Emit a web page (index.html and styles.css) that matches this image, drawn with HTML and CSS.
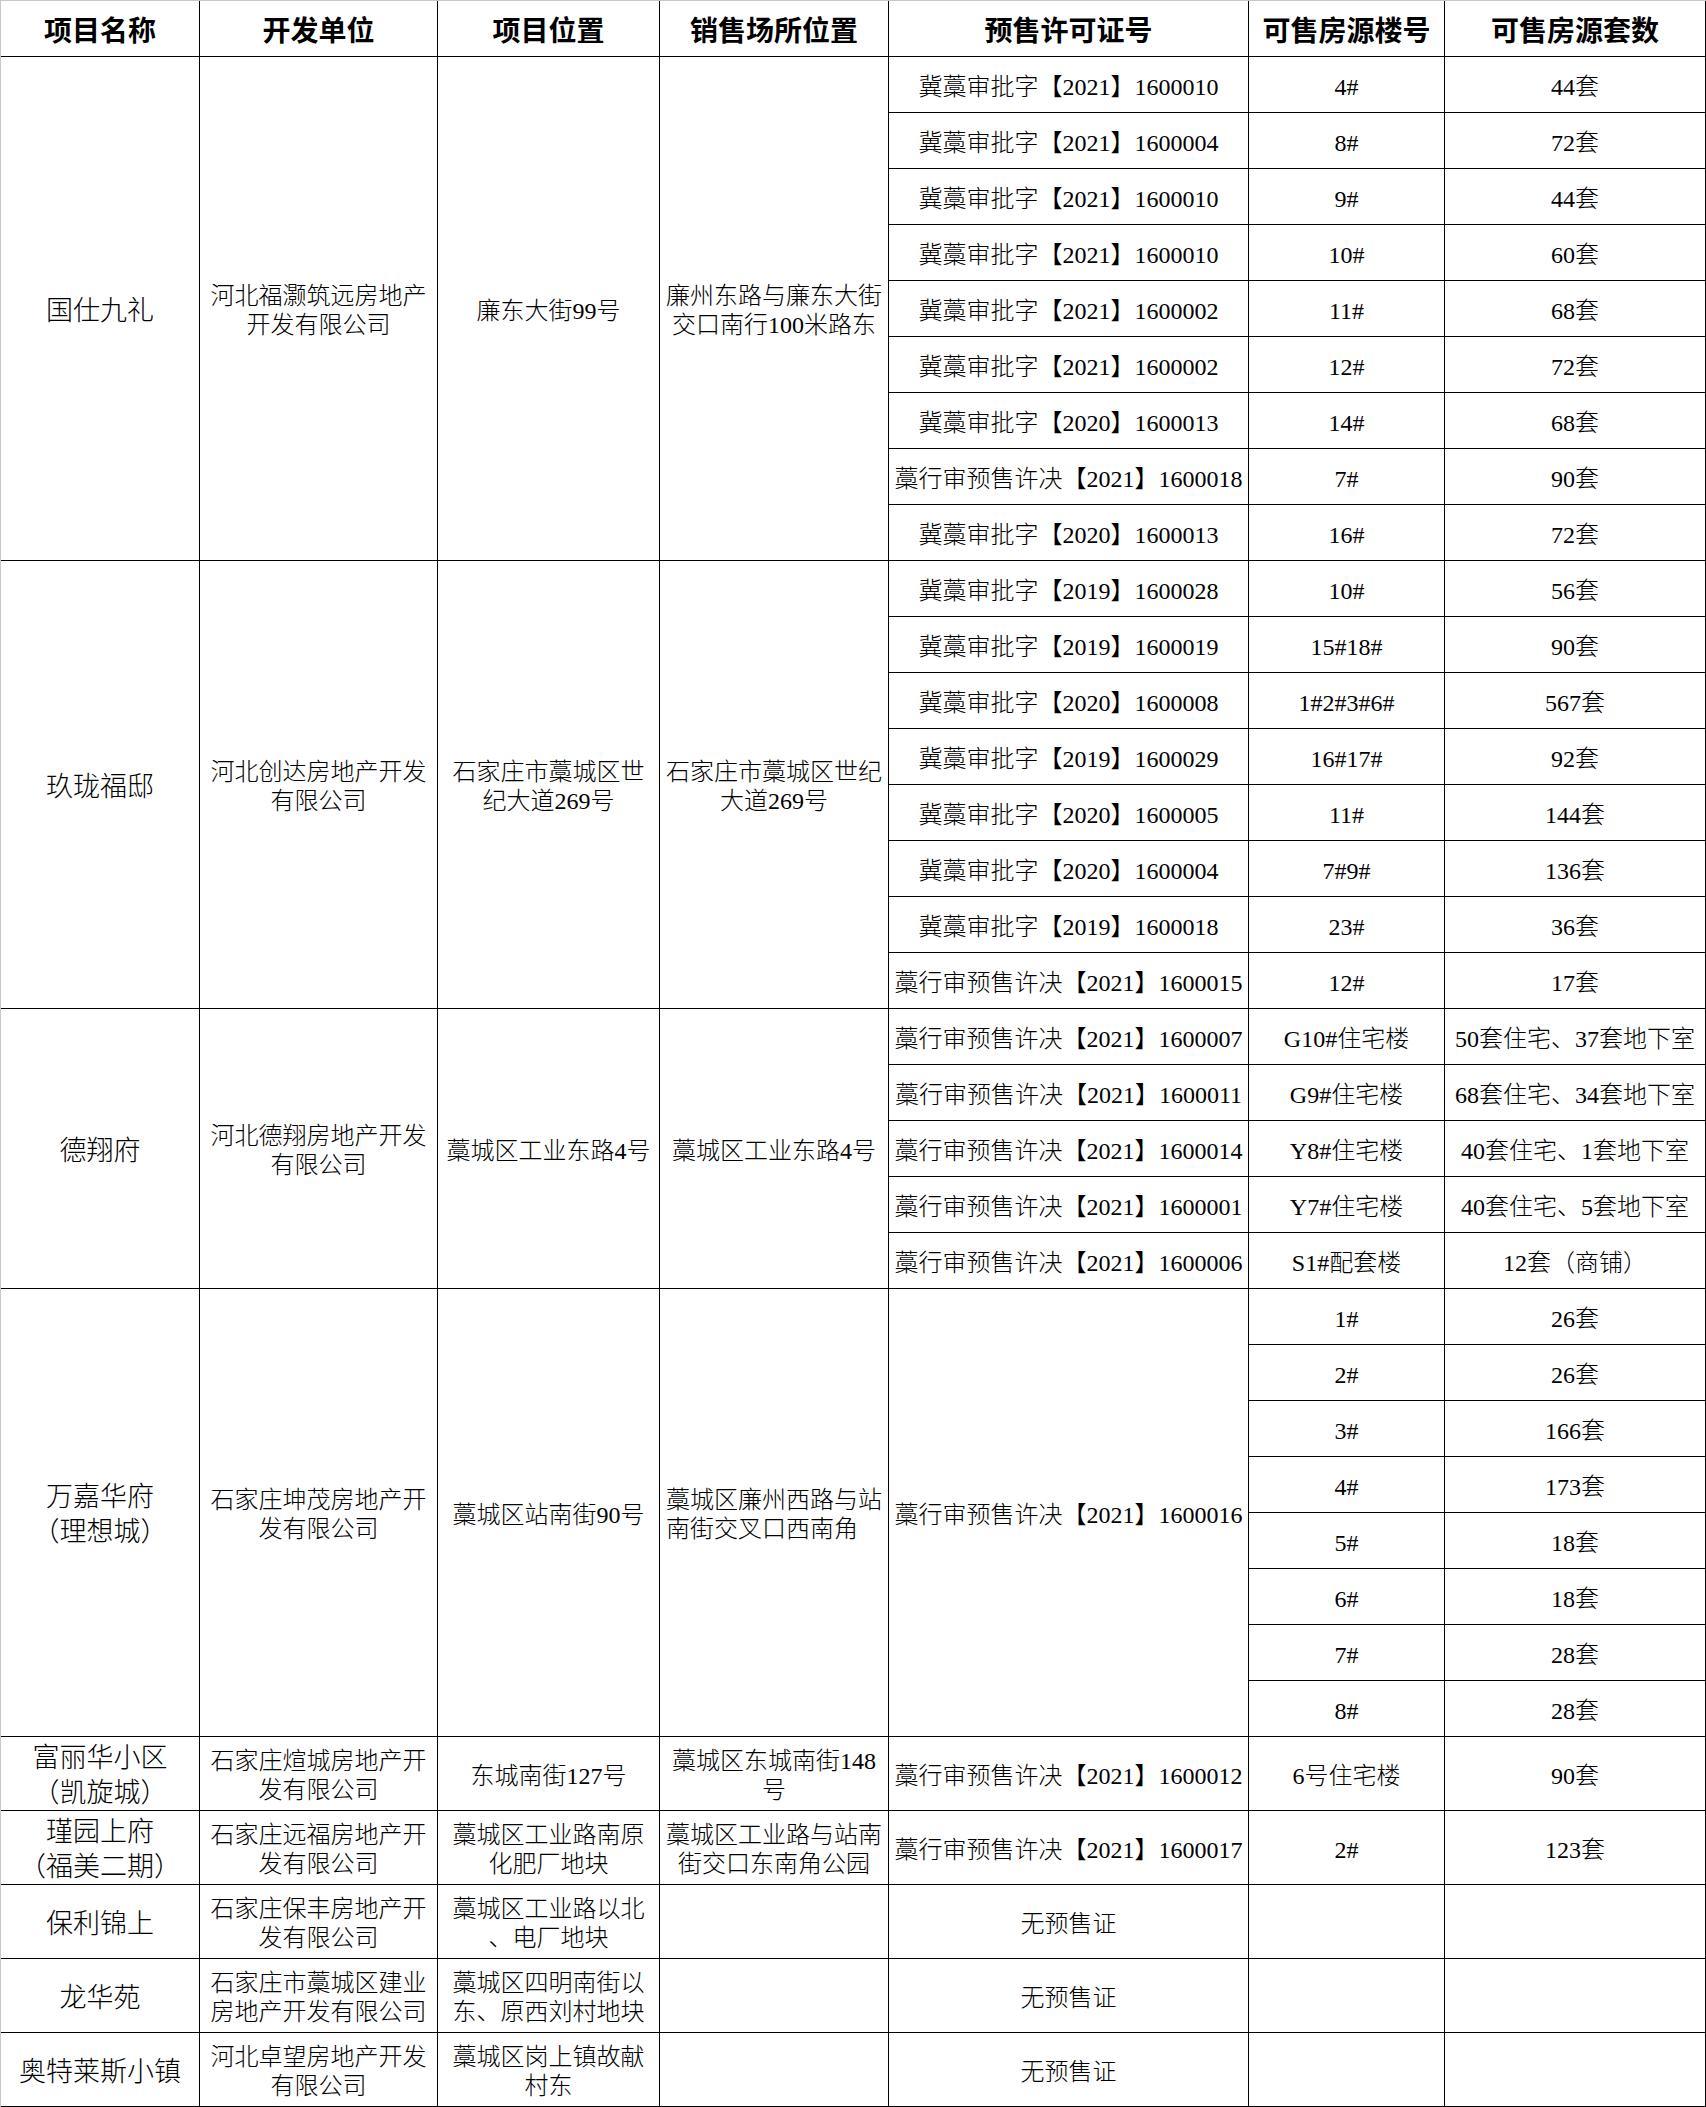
FILE: index.html
```html
<!DOCTYPE html>
<html lang="zh-CN">
<head>
<meta charset="utf-8">
<title>预售许可证信息</title>
<link rel="stylesheet" href="styles.css">
</head>
<body>
<div class="sheet">
  <div class="c h">项目名称</div>
  <div class="c h">开发单位</div>
  <div class="c h">项目位置</div>
  <div class="c h">销售场所位置</div>
  <div class="c h">预售许可证号</div>
  <div class="c h">可售房源楼号</div>
  <div class="c h">可售房源套数</div>

  <div class="c n s9">国仕九礼</div>
  <div class="c s9">河北福灏筑远房地产<br>开发有限公司</div>
  <div class="c s9">廉东大街99号</div>
  <div class="c s9">廉州东路与廉东大街<br>交口南行100米路东</div>
  <div class="c">冀藁审批字【2021】1600010</div><div class="c">4#</div><div class="c">44套</div>
  <div class="c">冀藁审批字【2021】1600004</div><div class="c">8#</div><div class="c">72套</div>
  <div class="c">冀藁审批字【2021】1600010</div><div class="c">9#</div><div class="c">44套</div>
  <div class="c">冀藁审批字【2021】1600010</div><div class="c">10#</div><div class="c">60套</div>
  <div class="c">冀藁审批字【2021】1600002</div><div class="c">11#</div><div class="c">68套</div>
  <div class="c">冀藁审批字【2021】1600002</div><div class="c">12#</div><div class="c">72套</div>
  <div class="c">冀藁审批字【2020】1600013</div><div class="c">14#</div><div class="c">68套</div>
  <div class="c">藁行审预售许决【2021】1600018</div><div class="c">7#</div><div class="c">90套</div>
  <div class="c">冀藁审批字【2020】1600013</div><div class="c">16#</div><div class="c">72套</div>

  <div class="c n s8">玖珑福邸</div>
  <div class="c s8">河北创达房地产开发<br>有限公司</div>
  <div class="c s8">石家庄市藁城区世<br>纪大道269号</div>
  <div class="c s8">石家庄市藁城区世纪<br>大道269号</div>
  <div class="c">冀藁审批字【2019】1600028</div><div class="c">10#</div><div class="c">56套</div>
  <div class="c">冀藁审批字【2019】1600019</div><div class="c">15#18#</div><div class="c">90套</div>
  <div class="c">冀藁审批字【2020】1600008</div><div class="c">1#2#3#6#</div><div class="c">567套</div>
  <div class="c">冀藁审批字【2019】1600029</div><div class="c">16#17#</div><div class="c">92套</div>
  <div class="c">冀藁审批字【2020】1600005</div><div class="c">11#</div><div class="c">144套</div>
  <div class="c">冀藁审批字【2020】1600004</div><div class="c">7#9#</div><div class="c">136套</div>
  <div class="c">冀藁审批字【2019】1600018</div><div class="c">23#</div><div class="c">36套</div>
  <div class="c">藁行审预售许决【2021】1600015</div><div class="c">12#</div><div class="c">17套</div>

  <div class="c n s5">德翔府</div>
  <div class="c s5">河北德翔房地产开发<br>有限公司</div>
  <div class="c s5">藁城区工业东路4号</div>
  <div class="c s5">藁城区工业东路4号</div>
  <div class="c">藁行审预售许决【2021】1600007</div><div class="c">G10#住宅楼</div><div class="c">50套住宅、37套地下室</div>
  <div class="c">藁行审预售许决【2021】1600011</div><div class="c">G9#住宅楼</div><div class="c">68套住宅、34套地下室</div>
  <div class="c">藁行审预售许决【2021】1600014</div><div class="c">Y8#住宅楼</div><div class="c">40套住宅、1套地下室</div>
  <div class="c">藁行审预售许决【2021】1600001</div><div class="c">Y7#住宅楼</div><div class="c">40套住宅、5套地下室</div>
  <div class="c">藁行审预售许决【2021】1600006</div><div class="c">S1#配套楼</div><div class="c">12套（商铺）</div>

  <div class="c n s8">万嘉华府<br>（理想城）</div>
  <div class="c s8">石家庄坤茂房地产开<br>发有限公司</div>
  <div class="c s8">藁城区站南街90号</div>
  <div class="c s8"><span class="left">藁城区廉州西路与站<br>南街交叉口西南角</span></div>
  <div class="c s8">藁行审预售许决【2021】1600016</div>
  <div class="c">1#</div><div class="c">26套</div>
  <div class="c">2#</div><div class="c">26套</div>
  <div class="c">3#</div><div class="c">166套</div>
  <div class="c">4#</div><div class="c">173套</div>
  <div class="c">5#</div><div class="c">18套</div>
  <div class="c">6#</div><div class="c">18套</div>
  <div class="c">7#</div><div class="c">28套</div>
  <div class="c">8#</div><div class="c">28套</div>

  <div class="c n">富丽华小区<br>（凯旋城）</div>
  <div class="c">石家庄煊城房地产开<br>发有限公司</div>
  <div class="c">东城南街127号</div>
  <div class="c">藁城区东城南街148<br>号</div>
  <div class="c">藁行审预售许决【2021】1600012</div>
  <div class="c">6号住宅楼</div>
  <div class="c">90套</div>

  <div class="c n">瑾园上府<br>（福美二期）</div>
  <div class="c">石家庄远福房地产开<br>发有限公司</div>
  <div class="c">藁城区工业路南原<br>化肥厂地块</div>
  <div class="c">藁城区工业路与站南<br>街交口东南角公园</div>
  <div class="c">藁行审预售许决【2021】1600017</div>
  <div class="c">2#</div>
  <div class="c">123套</div>

  <div class="c n">保利锦上</div>
  <div class="c">石家庄保丰房地产开<br>发有限公司</div>
  <div class="c">藁城区工业路以北<br>、电厂地块</div>
  <div class="c"></div>
  <div class="c">无预售证</div>
  <div class="c"></div>
  <div class="c"></div>

  <div class="c n">龙华苑</div>
  <div class="c">石家庄市藁城区建业<br>房地产开发有限公司</div>
  <div class="c">藁城区四明南街以<br>东、原西刘村地块</div>
  <div class="c"></div>
  <div class="c">无预售证</div>
  <div class="c"></div>
  <div class="c"></div>

  <div class="c n">奥特莱斯小镇</div>
  <div class="c">河北卓望房地产开发<br>有限公司</div>
  <div class="c">藁城区岗上镇故献<br>村东</div>
  <div class="c"></div>
  <div class="c">无预售证</div>
  <div class="c"></div>
  <div class="c"></div>
</div>
</body>
</html>
```
FILE: styles.css
```css
* {
  box-sizing: border-box;
}

html, body {
  margin: 0;
  padding: 0;
  background: #ffffff;
}

.sheet {
  display: grid;
  grid-template-columns: 199px 238px 222px 229px 360px 196px 261px;
  grid-template-rows: repeat(31, 56px) repeat(5, 74px);
  width: 1706px;
  border-top: 1px solid #c8c8c8;
  border-left: 1px solid #c8c8c8;
  font-family: "Liberation Serif", "Noto Sans CJK SC", serif;
  font-size: 24px;
  font-weight: 300;
  line-height: 29px;
  color: #000000;
}

.c {
  display: flex;
  align-items: center;
  justify-content: center;
  text-align: center;
  white-space: nowrap;
  padding-top: 5px;
  border-right: 1px solid #000000;
  border-bottom: 1px solid #000000;
  overflow: hidden;
}

.h {
  font-size: 28px;
  font-weight: 700;
}

.n {
  font-size: 27px;
  line-height: 35px;
}

.left {
  text-align: left;
}

.s5 { grid-row: span 5; }
.s8 { grid-row: span 8; }
.s9 { grid-row: span 9; }
```
